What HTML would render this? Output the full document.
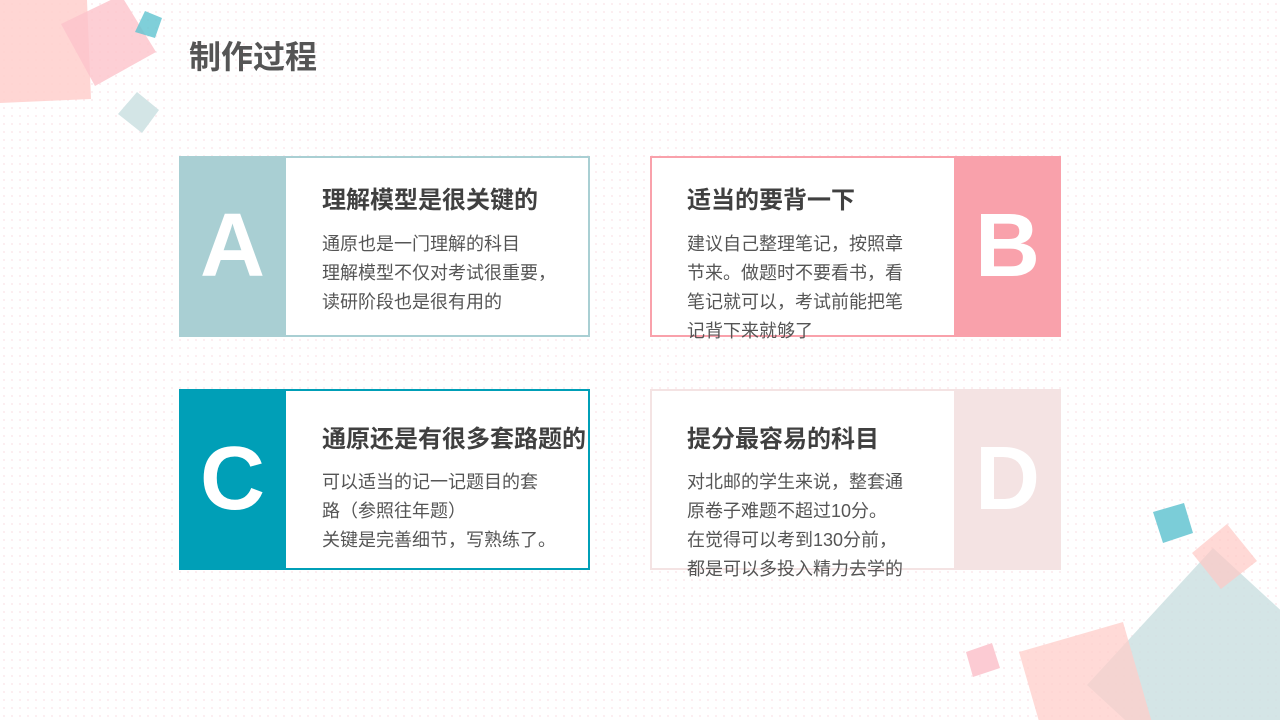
<!DOCTYPE html>
<html><head><meta charset="utf-8"><style>
*{margin:0;padding:0;box-sizing:border-box}
html,body{width:1280px;height:720px;overflow:hidden}
body{position:relative;background:#fff;
background-image:radial-gradient(circle,#fbe6ea 0.7px,transparent 1.1px);background-size:8px 8px;
font-family:"Liberation Sans","Noto Sans CJK SC",sans-serif}
svg.bg{position:absolute;left:0;top:0;display:block}
h1{position:absolute;left:189px;top:32px;font-size:32px;font-weight:bold;color:#555}
.card{position:absolute;width:411px;height:181px;border:2px solid;background:#fff}
.blk{position:absolute;top:-2px;width:107px;height:181px;color:#fff;font-weight:bold;font-size:90px;text-align:center;line-height:181px}
.t{position:absolute;font-size:24px;font-weight:bold;color:#404040;white-space:nowrap;line-height:30px}
.b{position:absolute;font-size:18px;color:#555;line-height:29px}
</style></head><body>
<svg class="bg" width="1280" height="720">
<polygon points="0,0 87,0 91,99 0,103" fill="#ffcfcc" opacity="0.85"/>
<polygon points="61,24 121,-5 156,52 95,86" fill="#fcc3cb" opacity="0.8"/>
<polygon points="145,11 162,18 155,38 135,32" fill="#5fc3d0" opacity="0.8"/>
<polygon points="118,114 137,92 159,110 142,133" fill="#d3e5e6"/>
<polygon points="1213,548 1087,685 1224,811 1350,674" fill="#c9dfe0" opacity="0.8"/>
<polygon points="1019,652 1123,622 1153,726 1049,756" fill="#ffcdc9" opacity="0.75"/>
<polygon points="1192,553 1227,524 1257,561 1221,589" fill="#ffc9c4" opacity="0.7"/>
<polygon points="1153,512 1184,503 1193,533 1163,543" fill="#7bcdd8"/>
<polygon points="966,652 992,643 1000,668 973,677" fill="#fccbd3"/>
</svg>
<h1>制作过程</h1>

<div class="card" style="left:179px;top:156px;border-color:#a9cfd3">
<div class="blk" style="left:-2px;background:#a9cfd3">A</div>
<div class="t" style="left:141px;top:28px">理解模型是很关键的</div>
<div class="b" style="left:141px;top:72px;width:240px">通原也是一门理解的科目<br>理解模型不仅对考试很重要，<br>读研阶段也是很有用的</div>
</div>

<div class="card" style="left:650px;top:156px;border-color:#f9a1ab">
<div class="blk" style="left:302px;background:#f9a1ab">B</div>
<div class="t" style="left:35px;top:28px">适当的要背一下</div>
<div class="b" style="left:35px;top:72px;width:230px">建议自己整理笔记，按照章节来。做题时不要看书，看笔记就可以，考试前能把笔记背下来就够了</div>
</div>

<div class="card" style="left:179px;top:389px;border-color:#009fb7">
<div class="blk" style="left:-2px;background:#009fb7">C</div>
<div class="t" style="left:141px;top:34px">通原还是有很多套路题的</div>
<div class="b" style="left:141px;top:77px;white-space:nowrap">可以适当的记一记题目的套<br>路（参照往年题）<br>关键是完善细节，写熟练了。</div>
</div>

<div class="card" style="left:650px;top:389px;border-color:#f4e3e3">
<div class="blk" style="left:302px;background:#f4e3e3">D</div>
<div class="t" style="left:35px;top:34px">提分最容易的科目</div>
<div class="b" style="left:35px;top:77px;width:230px">对北邮的学生来说，整套通原卷子难题不超过10分。<br>在觉得可以考到130分前，<br>都是可以多投入精力去学的</div>
</div>
</body></html>
